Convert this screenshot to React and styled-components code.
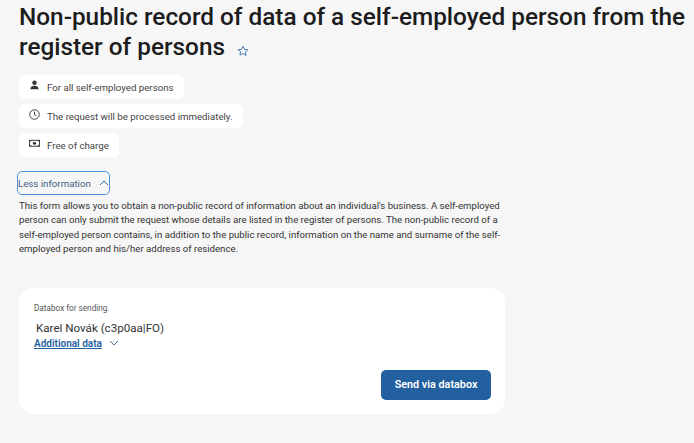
import React from "react";
import styled, { createGlobalStyle } from "styled-components";

const Global = createGlobalStyle`
  html, body { margin: 0; padding: 0; background: #f6f6f6; }
  body { font-family: Roboto, "Liberation Sans", sans-serif; color: #1b1b1b; overflow: hidden; }
`;
const Page = styled.div`
  width: 694px; height: 443px; box-sizing: border-box; padding: 2px 0 0 19px;
  display: flex; flex-direction: column; align-items: flex-start;
`;
const Title = styled.h1`
  margin: 0; width: 670px; font-size: 24.35px; line-height: 30px; font-weight: 500; color: #1c1c1c;
  white-space: nowrap;
`;
const Star = styled.svg`
  width: 12px; height: 12px; margin-left: 12px; vertical-align: -2px;
  fill: none; stroke: #2a62a6; stroke-width: 1.6; stroke-linejoin: round;
`;
const Chips = styled.div`
  margin-top: 13px; display: flex; flex-direction: column; align-items: flex-start; gap: 5px;
`;
const Chip = styled.div`
  height: 24px; box-sizing: border-box; padding: 0 10px 0 10px; background: #fff; border-radius: 5px;
  display: flex; align-items: center; gap: 7px; font-size: 9.7px; color: #444; white-space: nowrap;
`;
const ChipIcon = styled.svg`
  width: 11px; height: 11px; flex: none; margin-top: -3px; color: #333;
`;
const Toggle = styled.button`
  margin: 14px 0 0 -2px; width: 93px; height: 24px; box-sizing: border-box; padding: 0; border: 1.5px solid #4b94dd;
  border-radius: 5px; background: transparent; display: flex; align-items: center; gap: 8px;
  font: 400 9.7px Roboto, sans-serif; color: #3f5f86; white-space: nowrap;
`;
const Chevron = styled.svg`
  width: 10px; height: 6px; fill: none; stroke: ${p => p.$color}; stroke-width: 1;
  flex: none;
`;
const Description = styled.p`
  margin: 4px 0 0; width: 488px; font-size: 9.65px; line-height: 14.4px; color: #333;
`;
const Card = styled.section`
  margin-top: 31px; width: 486px; height: 126px; box-sizing: border-box; background: #fff; border-radius: 14px;
  padding: 15px 14px 14px 15px; display: flex; flex-direction: column;
`;
const Label = styled.div`
  font-size: 8.2px; line-height: 10px; color: #555;
`;
const Owner = styled.div`
  margin: 8px 0 0 2px; font-size: 11.6px; line-height: 15px; color: #333;
`;
const MoreRow = styled.div`
  margin-top: 1px; display: flex; align-items: center; gap: 7px;
`;
const MoreLink = styled.a`
  font-size: 10px; line-height: 13px; font-weight: 600; color: #245f9f; text-decoration: underline;
`;
const Actions = styled.div`
  margin-top: auto; display: flex; justify-content: flex-end;
`;
const SendButton = styled.button`
  width: 110px; height: 30px; border: none; border-radius: 5px; background: #22609f; color: #fff;
  font: 600 10.8px Roboto, sans-serif; padding: 0;
`;

export default function App() {
  return (
    <Page>
      <Global />
      <Title>
        Non-public record of data of a self-employed person from the<br />
        register of persons
        <Star viewBox="0 0 24 24" aria-hidden="true">
          <path d="M12 2.500l2.900 6.300 6.900.8-5.100 4.700 1.400 6.800L12 16.800 5.900 20.100l1.400-6.800L2.200 9.600l6.900-.8z" />
        </Star>
      </Title>
      <Chips>
        <Chip>
          <ChipIcon viewBox="0 0 12 12" aria-hidden="true">
            <circle cx="6" cy="3" r="2.400" fill="currentColor" />
            <path d="M1.500 10c0-2.500 2-3.700 4.500-3.700s4.500 1.200 4.500 3.700z" fill="currentColor" />
          </ChipIcon>
          For all self-employed persons
        </Chip>
        <Chip>
          <ChipIcon viewBox="0 0 12 12" aria-hidden="true">
            <circle cx="6" cy="6" r="5.200" fill="none" stroke="currentColor" />
            <path d="M6 2.800V6.200l2.200 1.400" fill="none" stroke="currentColor" />
          </ChipIcon>
          The request will be processed immediately.
        </Chip>
        <Chip>
          <ChipIcon viewBox="0 0 12 12" aria-hidden="true">
            <rect x="0.500" y="2.500" width="11" height="6.500" fill="none" stroke="currentColor" />
            <circle cx="6" cy="5.750" r="1.700" fill="currentColor" />
            <path d="M1 3h1.500M9.500 3H11M1 8.500h1.500M9.500 8.500H11" stroke="currentColor" />
          </ChipIcon>
          Free of charge
        </Chip>
      </Chips>
      <Toggle>
        Less information
        <Chevron $color="#3f6f9f" viewBox="0 0 10 6" aria-hidden="true"><path d="M1 5l4-4 4 4" /></Chevron>
      </Toggle>
      <Description>
        This form allows you to obtain a non-public record of information about an individual's business. A self-employed person can only submit the request whose details are listed in the register of persons. The non-public record of a self-employed person contains, in addition to the public record, information on the name and surname of the self-employed person and his/her address of residence.
      </Description>
      <Card>
        <Label>Databox for sending.</Label>
        <Owner>Karel Novák (c3p0aa|FO)</Owner>
        <MoreRow>
          <MoreLink>Additional data</MoreLink>
          <Chevron $color="#3f6f9f" viewBox="0 0 10 6" aria-hidden="true"><path d="M1 1l4 4 4-4" /></Chevron>
        </MoreRow>
        <Actions><SendButton>Send via databox</SendButton></Actions>
      </Card>
    </Page>
  );
}
